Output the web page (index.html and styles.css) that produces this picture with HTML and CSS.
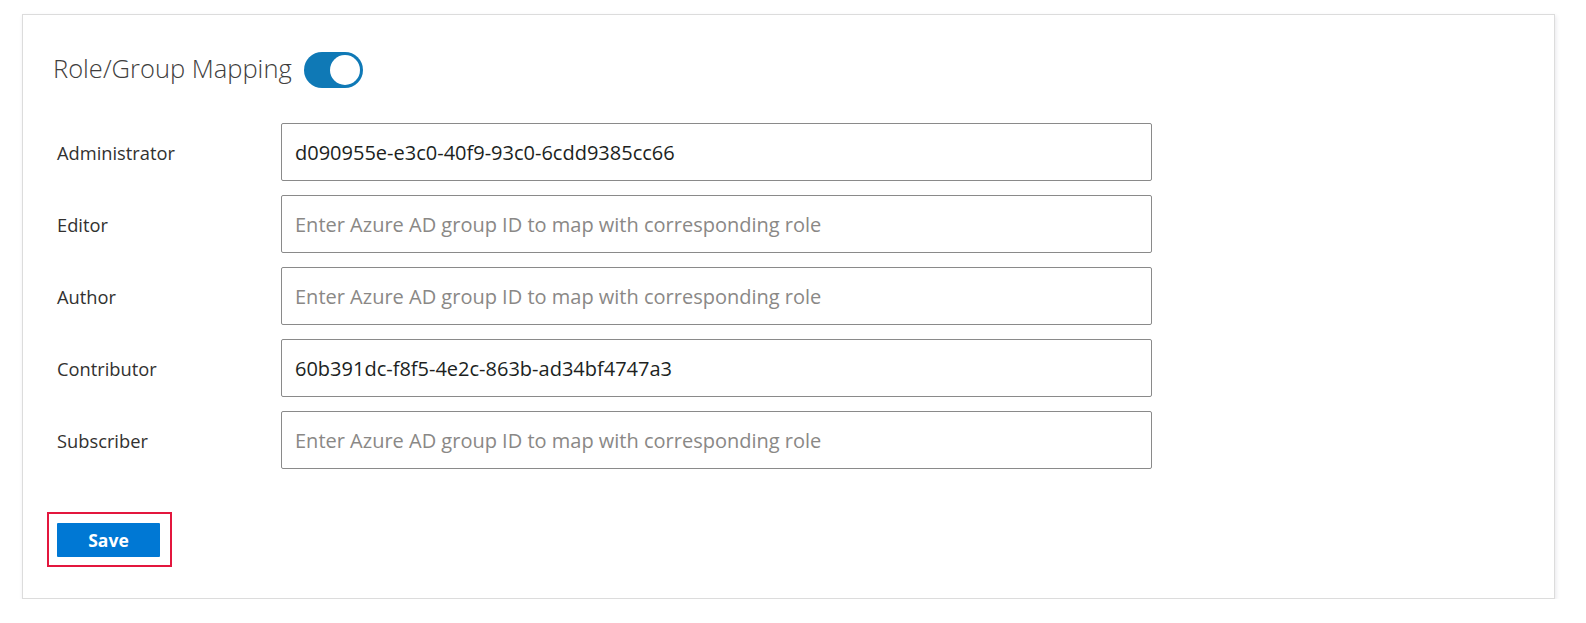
FILE: index.html
```html
<!DOCTYPE html>
<html lang="en">
<head>
<meta charset="utf-8">
<title>Role/Group Mapping</title>
<link rel="stylesheet" href="styles.css">
</head>
<body>
<section class="card">
  <header class="card-header">
    <h2 class="title">Role/Group Mapping</h2>
    <span class="toggle" role="switch" aria-checked="true"><span class="knob"></span></span>
  </header>
  <form class="mapping">
    <label class="label" for="r1">Administrator</label>
    <input class="field" id="r1" type="text" value="d090955e-e3c0-40f9-93c0-6cdd9385cc66">
    <label class="label" for="r2">Editor</label>
    <input class="field" id="r2" type="text" placeholder="Enter Azure AD group ID to map with corresponding role">
    <label class="label" for="r3">Author</label>
    <input class="field" id="r3" type="text" placeholder="Enter Azure AD group ID to map with corresponding role">
    <label class="label" for="r4">Contributor</label>
    <input class="field" id="r4" type="text" value="60b391dc-f8f5-4e2c-863b-ad34bf4747a3">
    <label class="label" for="r5">Subscriber</label>
    <input class="field" id="r5" type="text" placeholder="Enter Azure AD group ID to map with corresponding role">
  </form>
  <div class="save-highlight">
    <button class="save" type="button">Save</button>
  </div>
</section>
</body>
</html>
```

FILE: styles.css
```css
html, body {
  margin: 0;
  padding: 0;
  background: #ffffff;
}

body {
  font-family: "Open Sans", "Noto Sans", sans-serif;
  color: #323130;
  padding: 14px 0 0 22px;
}

.card {
  box-sizing: border-box;
  width: 1533px;
  height: 585px;
  border: 1px solid #dcdcdc;
  background: #fff;
  box-shadow: 1px 2px 4px rgba(60, 60, 90, 0.12);
  padding: 37px 0 0 24px;
}

.card-header {
  display: flex;
  align-items: center;
  height: 36px;
  margin-left: 6px;
}

.title {
  margin: 0 0 4px 0;
  font-size: 25.5px;
  font-weight: 300;
  color: #3f3e3d;
  line-height: 32px;
}

.toggle {
  box-sizing: border-box;
  display: flex;
  justify-content: flex-end;
  align-items: center;
  width: 59px;
  height: 36px;
  border-radius: 18px;
  background: #0f79b6;
  padding: 3px;
  margin-left: 12px;
}

.knob {
  width: 30px;
  height: 30px;
  border-radius: 50%;
  background: #fff;
}

.mapping {
  display: grid;
  grid-template-columns: 224px 871px;
  grid-auto-rows: 58px;
  row-gap: 14px;
  align-items: center;
  margin: 35px 0 0 10px;
}

.label {
  font-size: 18.3px;
  color: #323130;
}

.field {
  box-sizing: border-box;
  height: 58px;
  width: 100%;
  border: 1px solid #8a8a8a;
  border-radius: 2px;
  padding: 0 13px;
  font-family: "Open Sans", "Noto Sans", sans-serif;
  font-size: 20px;
  color: #201f1e;
  background: #fff;
  outline: none;
}

.field::placeholder {
  color: #8a8886;
  opacity: 1;
}

.save-highlight {
  display: inline-block;
  margin-top: 43px;
  border: 2px solid #e3173e;
  padding: 9px 10px 8px 8px;
}

.save {
  display: block;
  width: 103px;
  height: 34px;
  border: none;
  border-radius: 1px;
  background: #0078d4;
  color: #fff;
  font-family: "Open Sans", "Noto Sans", sans-serif;
  font-weight: 700;
  font-size: 17.5px;
  padding: 0;
  cursor: pointer;
}
```
